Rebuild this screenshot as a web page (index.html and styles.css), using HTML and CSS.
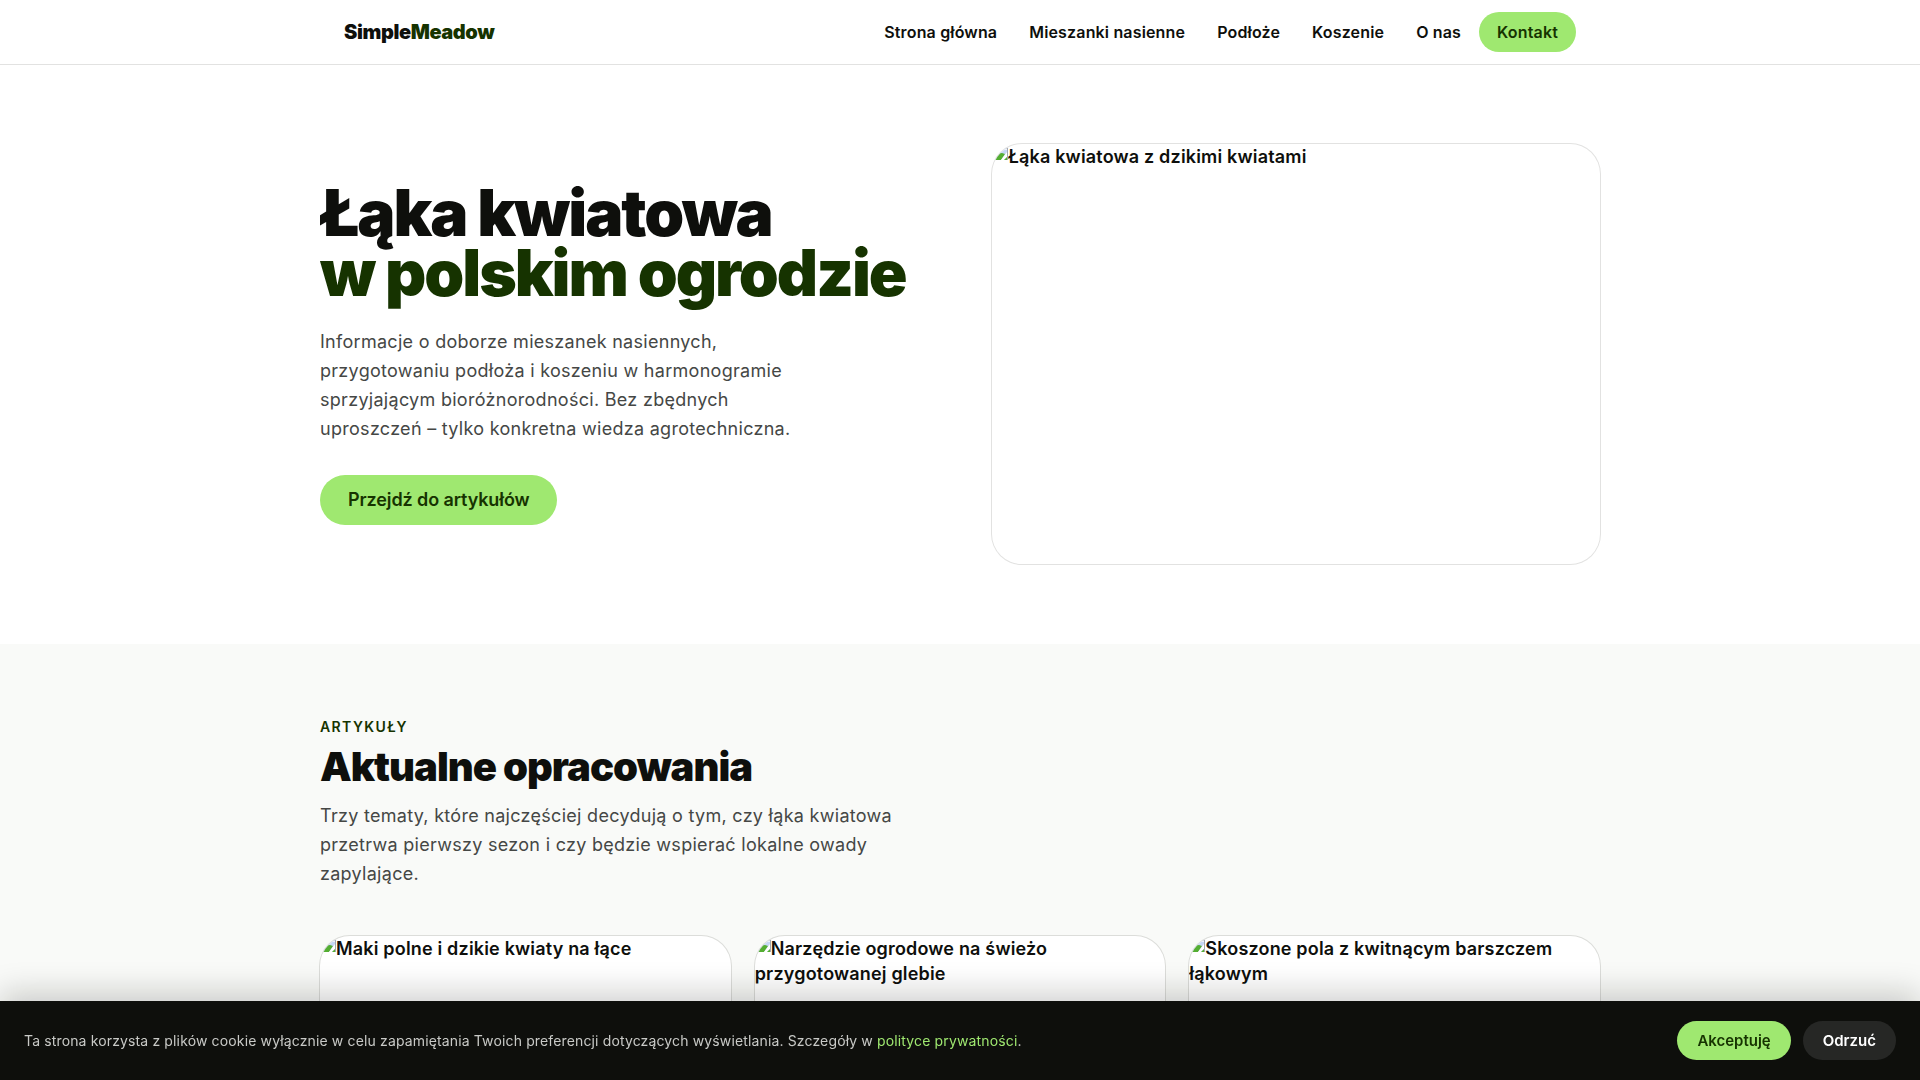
FILE: index.html
```
<!DOCTYPE html>
<html lang="pl">
<head>
    <meta charset="UTF-8">
    <meta name="viewport" content="width=device-width, initial-scale=1.0">
    <title>SimpleMeadow – Łąka kwiatowa w polskim ogrodzie</title>
    <link rel="stylesheet" href="styles.css">
</head>
<body>
    <svg class="sprite" aria-hidden="true">
        <symbol id="picture" viewBox="0 0 16 16">
            <path d="M0 0h11l5 5v11H0z" fill="#c6d7f5"/>
            <path d="M10 3c1-2 3-1 3 1h2v2H9c-1-1 0-3 1-3z" fill="#eef3fd"/>
            <path d="M1 16v-2c3-3 6-5 9-5l3 1-4 6z" fill="#54ae32"/>
            <path d="M9 16l6-8v5l-3 3z" fill="#fff"/>
            <path d="M12 16l3-3v3z" fill="#54ae32"/>
            <path d="M11 0v4h4.500v12" stroke="#a3a8b0" fill="none"/>
        </symbol>
    </svg>

    <header class="site-header">
        <div class="container nav-inner">
            <a class="logo" href="#">Simple<span>Meadow</span></a>
            <nav class="nav-links">
                <a href="#">Strona główna</a>
                <a href="#">Mieszanki nasienne</a>
                <a href="#">Podłoże</a>
                <a href="#">Koszenie</a>
                <a href="#">O nas</a>
                <a class="nav-cta" href="#">Kontakt</a>
            </nav>
        </div>
    </header>

    <main>
        <section class="hero">
            <div class="container hero-grid">
                <div>
                    <h1>Łąka kwiatowa <span>w polskim ogrodzie</span></h1>
                    <p class="lead">Informacje o doborze mieszanek nasiennych, przygotowaniu podłoża i koszeniu w harmonogramie sprzyjającym bioróżnorodności. Bez zbędnych uproszczeń – tylko konkretna wiedza agrotechniczna.</p>
                    <a class="btn" href="#artykuly">Przejdź do artykułów</a>
                </div>
                <div class="hero-image"><svg class="picture-icon"><use href="#picture"/></svg>Łąka kwiatowa z dzikimi kwiatami</div>
            </div>
        </section>

        <section class="articles" id="artykuly">
            <div class="container">
                <p class="eyebrow">Artykuły</p>
                <h2>Aktualne opracowania</h2>
                <p class="section-lead">Trzy tematy, które najczęściej decydują o tym, czy łąka kwiatowa przetrwa pierwszy sezon i czy będzie wspierać lokalne owady zapylające.</p>
                <div class="cards">
                    <article class="card"><svg class="picture-icon"><use href="#picture"/></svg>Maki polne i dzikie kwiaty na łące</article>
                    <article class="card"><svg class="picture-icon"><use href="#picture"/></svg>Narzędzie ogrodowe na świeżo przygotowanej glebie</article>
                    <article class="card"><svg class="picture-icon"><use href="#picture"/></svg>Skoszone pola z kwitnącym barszczem łąkowym</article>
                </div>
            </div>
        </section>
    </main>

    <div class="cookie-bar">
        <p>Ta strona korzysta z plików cookie wyłącznie w celu zapamiętania Twoich preferencji dotyczących wyświetlania. Szczegóły w <a href="#">polityce prywatności</a>.</p>
        <div class="cookie-actions">
            <button class="accept" type="button">Akceptuję</button>
            <button class="reject" type="button">Odrzuć</button>
        </div>
    </div>
</body>
</html>
```
FILE: styles.css
```
* {
    margin: 0;
    padding: 0;
    box-sizing: border-box;
}

body {
    font-family: 'Inter', 'Liberation Sans', sans-serif;
    font-size: 18px;
    font-weight: 600;
    line-height: 25px;
    letter-spacing: 0.01em;
    color: #0e0f0c;
    background: #fff;
}

a {
    color: inherit;
    text-decoration: none;
}

.sprite {
    display: none;
}

.container {
    max-width: 1280px;
    margin: 0 auto;
}

.site-header {
    position: relative;
    background: #fff;
    box-shadow: 0 1px 0 rgba(14, 15, 12, 0.12);
}

.nav-inner {
    display: flex;
    justify-content: space-between;
    align-items: center;
    padding: 12px 24px;
}

.logo {
    font-size: 20px;
    font-weight: 900;
    letter-spacing: -0.02em;
}

.logo span,
h1 span {
    color: #163300;
}

.nav-links {
    display: flex;
    align-items: center;
    gap: 4px;
    font-size: 16px;
    letter-spacing: 0.01em;
}

.nav-links a {
    padding: 8px 14px;
    line-height: 24px;
}

.nav-links .nav-cta {
    padding: 8px 18px;
    border-radius: 999px;
    background: #9fe870;
    color: #163300;
}

.hero {
    padding: 80px 0;
}

.hero-grid {
    display: grid;
    grid-template-columns: 1fr 1fr;
    gap: 64px;
    align-items: center;
}

h1 {
    font-size: 64px;
    font-weight: 900;
    line-height: 60px;
    letter-spacing: -2px;
}

h1 span {
    display: block;
}

.lead,
.section-lead {
    font-weight: 400;
    line-height: 29px;
    letter-spacing: 0.016em;
    color: #454745;
}

.lead {
    max-width: 480px;
    margin: 24px 0 32px;
}

.btn {
    display: inline-block;
    padding: 13px 28px;
    border-radius: 999px;
    line-height: 24px;
    letter-spacing: -0.006em;
    background: #9fe870;
    color: #163300;
}

.hero-image,
.card {
    border-radius: 30px;
    background: #fff;
    box-shadow: 0 0 0 1px rgba(14, 15, 12, 0.12);
    overflow: hidden;
}

.hero-image {
    min-height: 420px;
}

.picture-icon {
    float: left;
    width: 16px;
    height: 16px;
}

.articles {
    padding: 72px 0;
    background: #f9faf8;
}

.eyebrow {
    font-size: 14px;
    line-height: 21px;
    letter-spacing: 0.1em;
    text-transform: uppercase;
    color: #163300;
}

h2 {
    margin: 8px 0 12px;
    font-size: 40px;
    font-weight: 900;
    line-height: 44px;
    letter-spacing: -1px;
}

.section-lead {
    max-width: 600px;
    margin-bottom: 48px;
}

.cards {
    display: grid;
    grid-template-columns: repeat(3, 1fr);
    gap: 24px;
}

.card {
    min-height: 400px;
}

.cookie-bar {
    position: fixed;
    left: 0;
    right: 0;
    bottom: 0;
    display: flex;
    justify-content: space-between;
    align-items: center;
    gap: 24px;
    padding: 20px 24px;
    background: #0e0f0c;
    box-shadow: 0 -8px 32px rgba(14, 15, 12, 0.2);
}

.cookie-bar p {
    font-size: 14px;
    font-weight: 400;
    line-height: 21px;
    letter-spacing: 0.01em;
    color: #c8c9c6;
}

.cookie-bar p a {
    color: #9fe870;
}

.cookie-actions {
    display: flex;
    gap: 12px;
}

.cookie-actions button {
    padding: 9px 20px;
    border: none;
    border-radius: 999px;
    font-family: inherit;
    font-size: 15px;
    font-weight: 600;
    line-height: 21px;
    cursor: pointer;
}

.cookie-actions .accept {
    background: #9fe870;
    color: #163300;
}

.cookie-actions .reject {
    background: #262725;
    color: #fff;
}
```
